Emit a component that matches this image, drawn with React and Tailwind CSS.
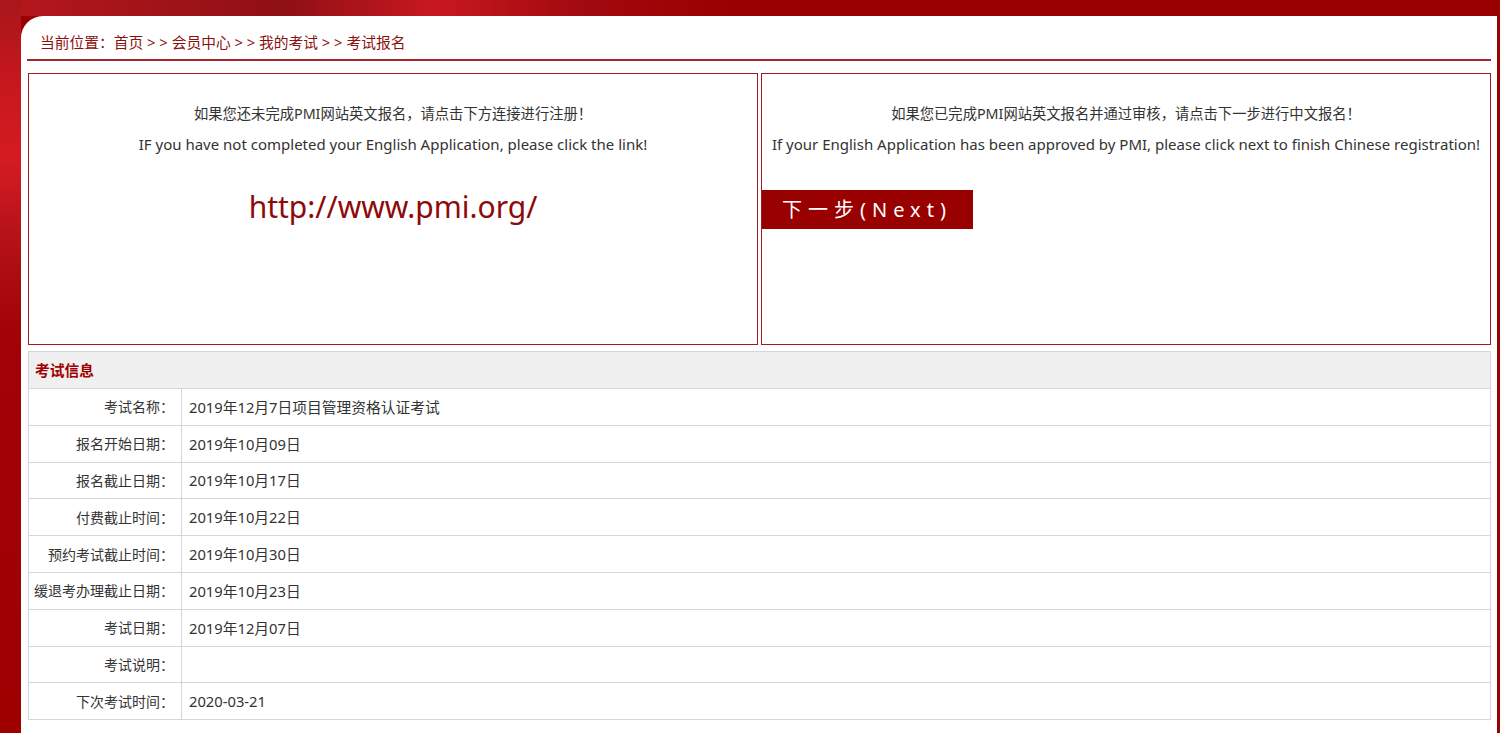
const rows = [
  ['考试名称：', '2019年12月7日项目管理资格认证考试'],
  ['报名开始日期：', '2019年10月09日'],
  ['报名截止日期：', '2019年10月17日'],
  ['付费截止时间：', '2019年10月22日'],
  ['预约考试截止时间：', '2019年10月30日'],
  ['缓退考办理截止日期：', '2019年10月23日'],
  ['考试日期：', '2019年12月07日'],
  ['考试说明：', ''],
  ['下次考试时间：', '2020-03-21'],
];

export default function App() {
  return (
    <div
      className="flex min-h-[733px] w-full bg-[#9b0000] text-[#333] font-['Microsoft_YaHei','Noto_Sans','Noto_Sans_CJK_SC',sans-serif]"
    >
      {/* left decorative strip */}
      <div className="w-[21px] shrink-0 bg-[linear-gradient(180deg,#a8161b_0%,#c8181e_12%,#d41c22_22%,#b5121a_32%,#a30208_45%,#9e0000_100%)]" />
      <div className="flex min-w-0 flex-1 flex-col">
        <div className="h-[16px] bg-[linear-gradient(90deg,#b3171c_0%,#8f1015_18%,#c8181f_28%,#a10a0f_38%,#9b0000_48%)]" />
        <div className="flex-1 rounded-tl-[22px] bg-white px-[6px] pb-[12px]">
          {/* breadcrumb */}
          <div className="flex h-[45px] items-end border-b-2 border-[#a2282d] pb-[6px] pl-[13px] text-[14.75px] text-[#8c1010]">
            当前位置：首页 &gt; &gt; 会员中心 &gt; &gt; 我的考试 &gt; &gt; 考试报名
          </div>

          <div className="mt-[12px] flex gap-[3px] pl-[1px]">
            <div className="h-[272px] w-[730px] border border-[#a01c22] pt-[29px] text-center">
              <div className="text-[14.3px] leading-[22px]">如果您还未完成PMI网站英文报名，请点击下方连接进行注册！</div>
              <div className="mt-[8px] text-[15px] leading-[22px]">IF you have not completed your English Application, please click the link!</div>
              <a href="#" className="mt-[32px] block text-[30px] leading-[40px] text-[#8c0a0a]">http://www.pmi.org/</a>
            </div>
            <div className="h-[272px] flex-1 border border-[#a01c22] pt-[29px]">
              <div className="text-center text-[14.3px] leading-[22px]">如果您已完成PMI网站英文报名并通过审核，请点击下一步进行中文报名！</div>
              <div className="mt-[8px] text-center text-[15px] leading-[22px]">If your English Application has been approved by PMI, please click next to finish Chinese registration!</div>
              <button className="mt-[35px] flex h-[39px] w-[211px] items-center bg-[#990000] pl-[20px] text-[20px] tracking-[6px] text-white">
                下一步(Next)
              </button>
            </div>
          </div>

          {/* exam info */}
          <div className="mt-[6px] ml-[1px] border border-[#d6d6d6] text-[14.75px]">
            <div className="flex h-[36px] items-center bg-[#f0f0f0] pl-[6px] font-bold text-[#a00000]">考试信息</div>
            {rows.map(([label, value]) => (
              <div key={label} className="flex h-[36.8px] border-t border-[#d6d6d6]">
                <div className="flex w-[153px] shrink-0 items-center justify-end whitespace-nowrap border-r border-[#d6d6d6] pr-[7px] text-[14px]">{label}</div>
                <div className="flex items-center pl-[7px]">{value}</div>
              </div>
            ))}
          </div>
        </div>
      </div>
      <div className="w-[3px] shrink-0 bg-[#9b0000]" />
    </div>
  );
}
